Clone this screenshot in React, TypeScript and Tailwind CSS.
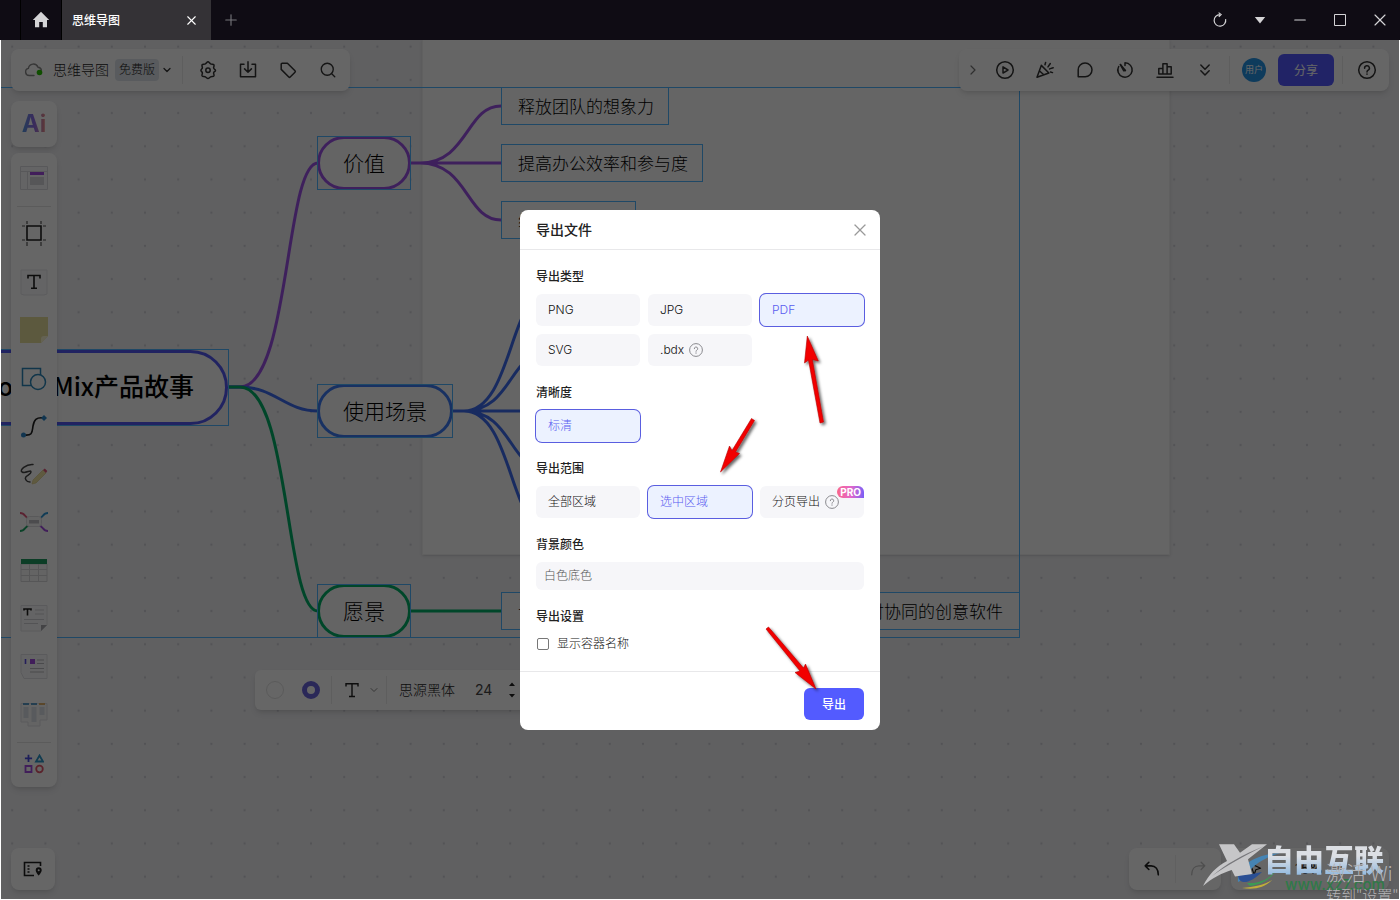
import { useState } from 'react'
import type { ReactNode } from 'react'
import { ChevronDown, ChevronRight, ChevronsDown, Minus, Plus, Search, X } from 'lucide-react'

const exportTypes = ['PNG', 'JPG', 'PDF', 'SVG', '.bdx']
const exportRanges = ['全部区域', '选中区域', '分页导出']

type MapNode = {
  text: string
  className: string
}

// 選択枠つきのトピック（角丸）
const topics: MapNode[] = [
  {
    text: '价值',
    className: 'left-[317px] top-[96px] h-[54px] w-[94px] border-[#9b51e6]',
  },
  {
    text: '使用场景',
    className: 'left-[317px] top-[344px] h-[54px] w-[136px] border-[#3e7bf5]',
  },
  {
    text: '愿景',
    className: 'left-[317px] top-[544px] h-[54px] w-[94px] border-[#00b067]',
  },
]

const leaves: MapNode[] = [
  { text: '释放团队的想象力', className: 'left-[501px] top-[47px] w-[168px]' },
  { text: '提高办公效率和参与度', className: 'left-[501px] top-[104px] w-[202px]' },
  { text: '缩短项目周期', className: 'left-[501px] top-[161px] w-[135px]' },
]

function Icon({ size = 20, children }: { size?: number; children: ReactNode }) {
  return (
    <svg
      width={size}
      height={size}
      viewBox="0 0 20 20"
      fill="none"
      stroke="currentColor"
      strokeWidth="1.5"
      strokeLinecap="round"
      strokeLinejoin="round"
    >
      {children}
    </svg>
  )
}

function ToolButton({ label, children }: { label: string; children: ReactNode }) {
  return (
    <button
      type="button"
      aria-label={label}
      className="flex h-10 w-10 items-center justify-center text-[#333]"
    >
      {children}
    </button>
  )
}

function SideButton({ label, children }: { label: string; children: ReactNode }) {
  return (
    <button
      type="button"
      aria-label={label}
      className="flex h-12 w-full items-center justify-center"
    >
      <svg width="32" height="32" viewBox="0 0 32 32" fill="none">
        {children}
      </svg>
    </button>
  )
}

function HelpMark() {
  return (
    <svg width="14" height="14" viewBox="0 0 14 14" fill="none" stroke="#8a8a8f">
      <circle cx="7" cy="7" r="6.4" />
      <path d="M5.3 5.7a1.7 1.7 0 1 1 2.5 1.5c-.5.3-.8.5-.8 1.1" strokeLinecap="round" />
      <path d="M7 9.8v.5" strokeLinecap="round" />
    </svg>
  )
}

function TitleBar() {
  return (
    <header className="flex h-10 shrink-0 bg-[#0f0c14] text-[#d4d4d6]">
      <button
        type="button"
        aria-label="首页"
        className="ml-5 flex w-[42px] items-center justify-center border-x border-black"
      >
        <svg width="18" height="18" viewBox="0 0 18 18" fill="currentColor">
          <path d="M9 .8 17.2 9H15v7.2h-4.2V11H7.2v5.2H3V9H.8z" />
        </svg>
      </button>
      <div className="flex w-[149px] items-center justify-between bg-[#343236] pr-3 pl-[10px] text-white">
        <span className="pt-px text-xs font-medium">思维导图</span>
        <button type="button" aria-label="关闭标签">
          <X size={15} strokeWidth={1.8} />
        </button>
      </div>
      <button
        type="button"
        aria-label="新建标签"
        className="flex w-10 items-center justify-center text-[#77767b]"
      >
        <Plus size={18} strokeWidth={1.5} />
      </button>
      <div className="ml-auto flex">
        <button type="button" aria-label="刷新" className="flex w-10 items-center justify-center">
          <svg width="16" height="16" viewBox="0 0 16 16" fill="none" stroke="currentColor" strokeWidth="1.2">
            <path d="M13.600 7.200A5.800 5.800 0 1 1 8 2.600M6.600.6l2.500 2-2.300 2.200" />
          </svg>
        </button>
        <button type="button" aria-label="更多" className="flex w-10 items-center justify-center">
          <svg width="12" height="8" viewBox="0 0 12 8" fill="currentColor">
            <path d="M.8 1h10.4L6 7.4z" />
          </svg>
        </button>
        <button type="button" aria-label="最小化" className="flex w-10 items-center justify-center">
          <Minus size={18} strokeWidth={1.5} />
        </button>
        <button type="button" aria-label="最大化" className="flex w-10 items-center justify-center">
          <svg width="12" height="12" viewBox="0 0 12 12" fill="none" stroke="currentColor">
            <path d="M.5.5h11v11H.5z" />
          </svg>
        </button>
        <button type="button" aria-label="关闭" className="flex w-10 items-center justify-center">
          <X size={20} strokeWidth={1.4} />
        </button>
      </div>
    </header>
  )
}

function MindMap() {
  return (
    <div className="absolute inset-0 overflow-hidden bg-[#efeff2] font-['Noto_Sans_CJK_SC',sans-serif]">
      <svg className="absolute inset-0 h-full w-full">
        <defs>
          <pattern id="dots" x="-4.4" y="-9.9" width="33.2" height="33.2" patternUnits="userSpaceOnUse">
            <circle cx="16.6" cy="16.6" r="1.1" fill="#cfcfd6" />
          </pattern>
        </defs>
        <rect width="100%" height="100%" fill="url(#dots)" />
      </svg>
      <div className="absolute top-0 left-[422px] h-[515px] w-[748px] border border-t-0 border-[#f0f0f0] bg-[#fcfcfc] shadow" />

      <svg className="absolute inset-0 h-full w-full" fill="none" strokeWidth="3">
        <g stroke="#9b51e6">
          <path d="M229 347H240C290 347 285 123 318 123" />
          <path d="M410 123H501M420 123C468 123 466 66 501 66M420 123C468 123 466 180 501 180" />
        </g>
        <g stroke="#3e6cf0">
          <path d="M229 347H240C275 347 285 371 318 371" />
          <path d="M452 371H543M464 371C511 371 510 257 543 257M464 371C511 371 510 314 543 314M464 371C511 371 510 428 543 428M464 371C511 371 510 485 543 485" />
        </g>
        <g stroke="#00b067">
          <path d="M229 347H240C290 347 285 571 318 571" />
          <path d="M410 571H501" />
        </g>
      </svg>

      <div className="absolute top-[309px] -left-[120px] flex h-[77px] w-[349px] border border-[#4fb4ff]">
        <div className="flex flex-1 items-center justify-end rounded-full border-[3px] border-[#5359f2] bg-[#fcfcfc] pr-[31px] pb-1 text-[25px] font-medium whitespace-nowrap text-black">
          BoardMix产品故事
        </div>
      </div>

      {topics.map((topic) => (
        <div key={topic.text} className={`absolute ${topic.className}`}>
          <div className="flex h-full items-center justify-center rounded-full border-[3px] border-inherit bg-[#fafafa] text-[21px] font-light whitespace-nowrap text-black">
            {topic.text}
          </div>
          <div className="absolute inset-0 border border-[#4fb4ff]" />
        </div>
      ))}

      {leaves.map((leaf) => (
        <div
          key={leaf.text}
          className={`absolute flex h-[38px] items-center border border-[#4fb4ff] bg-[#fcfcfc] pb-px pl-4 text-[17px] font-light whitespace-nowrap text-black ${leaf.className}`}
        >
          {leaf.text}
        </div>
      ))}
      <div className="absolute top-[552px] left-[501px] flex h-[38px] w-[519px] items-center justify-between border border-[#4fb4ff] bg-[#fafafa] px-4 pb-px text-[17px] font-light whitespace-nowrap text-black">
        <span>让</span>
        <span>实时协同的创意软件</span>
      </div>

      {/* 全体の選択範囲 */}
      <div className="absolute top-[47px] -left-[120px] h-[551px] w-[1140px] border border-[#4fb4ff]" />
    </div>
  )
}

function FileBar() {
  return (
    <div className="absolute top-[9px] left-[11px] flex h-[42px] items-center rounded-lg bg-white pr-[2px] pl-[13px] shadow-md">
      <svg width="20" height="16" viewBox="0 0 20 16" fill="none">
        <path
          d="M10 13.5H5.2a3.6 3.6 0 0 1-.8-7.1A5 5 0 0 1 14 5.2a3.8 3.8 0 0 1 3.4 3"
          stroke="#8a8a8a"
          strokeWidth="1.4"
          strokeLinecap="round"
        />
        <circle cx="15.5" cy="10.5" r="2.8" fill="#29c200" />
      </svg>
      <span className="ml-[9px] text-sm font-light text-[#222]">思维导图</span>
      <span className="ml-[6px] flex h-[22px] items-center rounded bg-[#dfe4ea] px-1 text-xs font-light text-[#222]">
        免费版
      </span>
      <button type="button" aria-label="文件菜单" className="ml-px flex w-[14px] justify-center text-[#333]">
        <ChevronDown size={12} strokeWidth={2.5} />
      </button>
      <div className="ml-2 h-7 w-px bg-[#ebebeb]" />
      <div className="ml-[5px] flex">
        <ToolButton label="设置">
          <Icon>
            <path d="M10 1.800c1 0 1.500 1.500 2.600 2.100 1.100.6 2.700.1 3.300.9.600 1-.3 2-.3 3 0 1.500 1.900 1.500 1.900 2.700s-1.900 1.200-1.900 2.400c0 1.100.8 2.100.3 3-.6.9-2.200.3-3.300.9-1.100.6-1.600 1.800-2.600 1.800s-1.500-1.200-2.600-1.800c-1.100-.6-2.700 0-3.300-.9-.5-.9.3-1.900.3-3 0-1.200-1.500-1.400-1.500-2.600s1.500-1.400 1.500-2.500c0-1-.8-2-.3-3 .6-.8 2.200-.3 3.300-.9C8.500 3.300 9 1.800 10 1.800z" />
            <circle cx="10" cy="10.200" r="2.200" />
          </Icon>
        </ToolButton>
        <ToolButton label="导出">
          <Icon>
            <path d="M6 4.200H2.500v12.600h15V4.200H14M10 1.800v10.400M6.600 8.900 10 12.300l3.400-3.400" />
          </Icon>
        </ToolButton>
        <ToolButton label="标签">
          <Icon>
            <path d="M3.200 4.200v5.200l7.600 7.600a1 1 0 0 0 1.400 0l4.800-4.800a1 1 0 0 0 0-1.400L9.400 3.200H4.200a1 1 0 0 0-1 1z" />
          </Icon>
        </ToolButton>
        <ToolButton label="搜索">
          <Search size={18} strokeWidth={1.8} />
        </ToolButton>
      </div>
    </div>
  )
}

function ActionBar() {
  return (
    <div className="absolute top-[9px] right-[11px] flex h-[42px] items-center rounded-lg bg-white pr-[2px] shadow-md">
      <button type="button" aria-label="收起" className="flex w-[26px] justify-center pl-[2px] text-[#777]">
        <ChevronRight size={16} strokeWidth={1.8} />
      </button>
      <ToolButton label="演示">
        <Icon>
          <circle cx="10" cy="10" r="8.300" />
          <path d="M8 6.900v6.200l5-3.100z" />
        </Icon>
      </ToolButton>
      <ToolButton label="庆祝">
        <Icon>
          <path d="M6.300 5.400 2 17.300l11.900-4.300zM6.300 5.400l7.600 7.600M4.600 11l4.200 3.700M10 4.700l.6-2.200M13 6.900l2.300-3.400M14.600 8.900l3.600-1.200M15.500 12l2 .6" />
        </Icon>
      </ToolButton>
      <ToolButton label="评论">
        <Icon>
          <path d="M3.200 16.800V10a6.900 6.900 0 1 1 6.900 6.800z" />
        </Icon>
      </ToolButton>
      <ToolButton label="计时">
        <Icon>
          <path d="M10 5.500V2.800a7.200 7.200 0 1 1-6.300 3.700M5.400 4.600l5 5.800" />
          <path d="m5.400 4.600 3.400 6.200 1.600-.4" />
        </Icon>
      </ToolButton>
      <ToolButton label="投票">
        <Icon>
          <path d="M2 17.300h16M3.800 14V8.500h4.100V14zM7.900 14V3.700h4.200V14zM12.100 14V6.700h4.100V14z" />
        </Icon>
      </ToolButton>
      <ToolButton label="更多工具">
        <ChevronsDown size={20} strokeWidth={1.800} />
      </ToolButton>
      <div className="ml-1 h-7 w-px bg-[#ebebeb]" />
      <span className="ml-3 flex h-6 w-6 items-center justify-center rounded-full bg-[#2494e6] text-[9px] text-white">
        用户
      </span>
      <button type="button" className="ml-3 h-8 w-14 rounded-md bg-[#5359ff] pt-px text-xs text-white">
        分享
      </button>
      <div className="ml-2 h-7 w-px bg-[#ebebeb]" />
      <div className="ml-1">
        <ToolButton label="帮助">
          <Icon>
            <circle cx="10" cy="10" r="8.300" />
            <path d="M7.600 8.200a2.400 2.400 0 1 1 3.600 2c-.8.500-1.200.8-1.200 1.700M10 14v.3" />
          </Icon>
        </ToolButton>
      </div>
    </div>
  )
}

function SideBar() {
  return (
    <aside className="absolute top-[61px] left-[11px] flex w-[46px] flex-col gap-[6px]">
      <button type="button" className="flex h-[46px] items-center justify-center rounded-lg bg-white shadow-md">
        <span className="bg-linear-to-r from-[#4a9ae0] via-[#8f6ae8] to-[#f08a7c] bg-clip-text text-2xl leading-none font-bold text-transparent">
          Ai
        </span>
      </button>
      <nav className="rounded-lg bg-white pt-px pb-[5px] shadow-md">
        <SideButton label="模板">
          <path d="M2.500 4.500h27v23h-27z" fill="#fbfbfc" stroke="#dcdce1" />
          <path d="M2.500 9.500h27M9.500 9.500v18" stroke="#dcdce1" />
          <path d="M12 10h14v3H12z" fill="#a24be0" />
          <path d="M12 15h14v8H12z" fill="#d8d8dc" />
        </SideButton>
        <div className="flex h-2 items-center px-[6px]">
          <div className="h-px flex-1 bg-[#e4e4e4]" />
        </div>
        <SideButton label="画板">
          <path d="M9 8h14v14H9z" stroke="#1f1f1f" strokeWidth="1.600" />
          <path
            d="M9 3v3M23 3v3M9 24v4M23 24v4M4 8h3M25 8h3M4 22h3M25 22h3"
            stroke="#555"
            strokeWidth="1.200"
          />
        </SideButton>
        <SideButton label="文本">
          <path d="M3 4h26v24l-3 1H6l-3-1z" fill="#fbfbfc" stroke="#e6e6ea" />
          <path
            d="M10 12.500V9.500h12v3M16 9.500v12.500M13 22.300h6"
            stroke="#1f1f1f"
            strokeWidth="1.600"
          />
        </SideButton>
        <SideButton label="便签">
          <path d="M2 3h28v19l-7 7H2z" fill="#e6df9c" />
          <path d="M23 29v-4a3 3 0 0 1 3-3h4z" fill="#fbf6cf" />
        </SideButton>
        <SideButton label="形状">
          <path d="M14 23.500H4.500V6.500h18V13" stroke="#2b86b8" strokeWidth="1.500" />
          <circle cx="20" cy="20" r="7.500" stroke="#2b86b8" strokeWidth="1.500" />
        </SideButton>
        <SideButton label="连线">
          <path d="M6 25c9 1 8-3 9-9s3-9 11-8" stroke="#1f1f1f" strokeWidth="1.600" />
          <circle cx="5.500" cy="25" r="2.500" fill="#2b86c8" />
          <path d="m26 5 3 3-3 3-3-3z" fill="#2b86c8" />
        </SideButton>
        <SideButton label="画笔">
          <path
            d="M15 6.500C8 6 1 12 4 14c4 2 9-3 9 0s-8 4-5 8c1 2 3 2 4 2"
            stroke="#444"
            strokeWidth="1.500"
            strokeLinecap="round"
          />
          <path d="m14 26 1-4L25 12l3 3-10 10z" fill="#eee0a0" stroke="#d8c87a" strokeWidth=".6" />
          <path d="m25 12 1.800-1.500 2.500 2.500L28 15z" fill="#e0567b" />
        </SideButton>
        <SideButton label="思维导图">
          <path d="M2 7c6 0 4 5 10 6" stroke="#e0567b" strokeWidth="2" />
          <path d="M30 7c-6 0-4 5-10 6" stroke="#2b96d6" strokeWidth="2" />
          <path d="M2 25c6 0 4-5 10-6" stroke="#1da565" strokeWidth="2" />
          <path d="M30 25c-6 0-4-5-10-6" stroke="#a24be0" strokeWidth="2" />
          <rect x="8.500" y="10.500" width="15" height="10" rx="3" fill="#fafafa" stroke="#dedee2" />
          <path d="M11 14h10v3.500H11z" fill="#bdbdc2" />
        </SideButton>
        <SideButton label="表格">
          <path d="M3 10h26v17.500H3z" fill="#fafafa" stroke="#d6d6da" />
          <path d="M3 15.500h26M3 21.500h26M11.500 10v17M20.500 10v17" stroke="#d6d6da" />
          <path d="M3 5h26v5H3z" fill="#1f9a5f" />
        </SideButton>
        <SideButton label="文档">
          <path d="M3 3.500h26V23l-6 6H3z" fill="#fbfbfc" stroke="#e2e2e6" />
          <path d="M23 29v-6h6z" fill="#a8a8ad" />
          <path d="M6 8.500V7h7v1.500M9.500 7v6.500" stroke="#1f1f1f" strokeWidth="1.600" />
          <path d="M17 8h9M17 12h9M6 17.500h20M6 21.500h14" stroke="#d0d0d4" />
        </SideButton>
        <SideButton label="卡片">
          <path d="M3 4.500h26v24H6l-3-6z" fill="#fbfbfc" stroke="#e2e2e6" />
          <path d="M7.500 9v5" stroke="#5a4be0" strokeWidth="1.600" />
          <path d="M12 9h5v5h-5z" fill="#a24be0" />
          <path d="M19 10h7M19 13.500h7M12 18.500h14M12 22h14" stroke="#b9b9be" />
        </SideButton>
        <SideButton label="看板">
          <path d="M3 5.500h26V22h-7v6H10v-4H3z" fill="#fafafa" stroke="#e2e2e6" />
          <path d="M5 6h6M13 6h6" stroke="#5b9bc8" strokeWidth="2" />
          <path d="M21 6h6" stroke="#e0b26b" strokeWidth="2" />
          <path d="M5.500 9h5v11h-5zM13.500 9h5v15h-5zM21.500 9h5v8h-5z" fill="#dde2e8" />
        </SideButton>
        <div className="flex h-2 items-center px-[6px]">
          <div className="h-px flex-1 bg-[#e4e4e4]" />
        </div>
        <button type="button" aria-label="更多" className="flex h-9 w-full items-center justify-center">
          <svg width="20" height="20" viewBox="0 0 20 20" fill="none" strokeWidth="1.800">
            <path d="M4.500.7v7.200M.9 4.300h7.200" stroke="#4a4be0" />
            <path d="M15.500 1.500 19 7.500h-7z" stroke="#2b96c8" />
            <path d="M1.500 12h6v6h-6z" stroke="#a24be0" />
            <circle cx="15.500" cy="15" r="3.300" stroke="#e0566b" />
          </svg>
        </button>
      </nav>
    </aside>
  )
}

function TextBar() {
  return (
    <div className="absolute top-[630px] left-[255px] flex h-10 w-[420px] items-center rounded-md bg-white shadow-md">
      <button
        type="button"
        aria-label="填充颜色"
        className="ml-[11px] h-[18px] w-[18px] rounded-full border border-[#e2e2e2]"
      />
      <button
        type="button"
        aria-label="边框颜色"
        className="ml-[18px] h-[18px] w-[18px] rounded-full border-[5px] border-[#6a64dc]"
      />
      <div className="ml-[11px] h-7 w-px bg-[#ebebeb]" />
      <button type="button" aria-label="文字样式" className="ml-3 flex items-center gap-2 text-[#222]">
        <svg width="16" height="16" viewBox="0 0 16 16" fill="none" stroke="currentColor" strokeWidth="1.400">
          <path d="M2 4.500V1.800h12v2.700M8 1.800v12.700M5 14.500h6" />
        </svg>
        <span className="text-[#888]">
          <ChevronDown size={12} />
        </span>
      </button>
      <div className="ml-[6px] h-7 w-px bg-[#ebebeb]" />
      <button type="button" className="ml-3 text-sm font-light text-[#222]">
        思源黑体
      </button>
      <button type="button" className="ml-5 text-sm text-[#444]">
        24
      </button>
      <svg className="ml-4" width="8" height="18" viewBox="0 0 8 18" fill="#222">
        <path d="M4 1.500 7 5H1zM4 16.500 1 13h6z" />
      </svg>
    </div>
  )
}

function BottomBars() {
  return (
    <>
      <div className="absolute bottom-[10px] left-[11px] flex h-[42px] w-11 items-center justify-center rounded-lg bg-white shadow-md">
        <button type="button" aria-label="导航" className="text-[#1f1f1f]">
          <svg width="20" height="16" viewBox="0 0 20 16" fill="none" stroke="currentColor" strokeWidth="1.600">
            <path d="M11 14.500H1.500v-13h16V5M4.500 5h2M4.500 8h2M4.500 11h2" />
            <path
              d="M15.700 6.200a3 3 0 0 0-3 3c0 2 3 5.300 3 5.300s3-3.300 3-5.300a3 3 0 0 0-3-3zm0 2a1 1 0 1 1 0 2 1 1 0 0 1 0-2z"
              fill="currentColor"
              fillRule="evenodd"
              stroke="none"
            />
          </svg>
        </button>
      </div>
      <div className="absolute right-[11px] bottom-[10px] flex gap-[10px]">
        <div className="flex h-[42px] w-[92px] items-center rounded-lg bg-white shadow-md">
          <button type="button" aria-label="撤销" className="flex flex-1 justify-center text-[#1f1f1f]">
            <Icon size={18}>
              <path d="M6.500 2.500 2.500 6.500l4 4M3 6.500h6c5 0 8 4 8 10" strokeWidth="1.800" />
            </Icon>
          </button>
          <div className="h-7 w-px bg-[#f0f0f0]" />
          <button type="button" aria-label="重做" className="flex flex-1 justify-center text-[#c4c4c4]">
            <Icon size={18}>
              <path d="m13.500 2.500 4 4-4 4M17 6.500h-6c-5 0-8 4-8 10" />
            </Icon>
          </button>
        </div>
        <div className="flex h-[42px] w-[158px] items-center rounded-lg bg-white pl-4 text-sm text-[#222] shadow-md">
          <Icon size={16}>
            <path d="m4 3 13 6-6 2-2 6z" />
          </Icon>
          <span className="ml-8">15%</span>
        </div>
      </div>
    </>
  )
}

function Option({
  text,
  selected,
  onClick,
  help,
  pro,
}: {
  text: string
  selected: boolean
  onClick: () => void
  help?: boolean
  pro?: boolean
}) {
  return (
    <button
      type="button"
      aria-pressed={selected}
      onClick={onClick}
      className={`relative flex h-8 items-center gap-[5px] rounded-md px-3 text-xs font-light ${
        selected ? 'bg-[#ecf2ff] text-[#5a5df0] ring-1 ring-[#5a5ee0]' : 'bg-[#f6f6f9] text-[#111]'
      }`}
    >
      {text}
      {help && <HelpMark />}
      {pro && (
        <span className="absolute top-0 right-0 flex h-3 items-center rounded-t-md rounded-bl-md bg-linear-to-r from-[#f9658a] via-[#e566c8] to-[#7b5cf5] px-[3px] text-[10px] leading-3 font-bold text-white">
          PRO
        </span>
      )}
    </button>
  )
}

function Arrows() {
  return (
    <svg
      className="pointer-events-none absolute inset-0 h-full w-full"
      viewBox="0 0 360 520"
      fill="#f20000"
      stroke="#b30000"
      strokeWidth=".6"
    >
      <defs>
        <filter id="arrowShadow" x="-30%" y="-30%" width="160%" height="160%">
          <feDropShadow dx="2" dy="2" stdDeviation="1.500" floodColor="#000" floodOpacity=".6" />
        </filter>
      </defs>
      <g filter="url(#arrowShadow)">
        <path d="m287.300 126 11 25-6-1.500L303.500 212l-3.500 1L288.500 150l-4 3z" />
        <path d="m200.500 262 9-26 2.500 4.500L231.500 208.500l3 2L215.500 242l4 1.500z" />
        <path d="m296 479-21-16.500 5-1.500L246 419l2.500-2L283.500 458l2-4z" />
      </g>
    </svg>
  )
}

function ExportDialog() {
  const [type, setType] = useState('PDF')
  const [range, setRange] = useState('选中区域')
  const [showName, setShowName] = useState(false)

  return (
    <div
      role="dialog"
      aria-labelledby="export-title"
      className="relative w-[360px] rounded-lg bg-white text-[#222]"
    >
      <div className="flex h-10 items-center justify-between border-b border-[#e8e8ea] pr-[10px] pl-4">
        <h1 id="export-title" className="text-sm font-medium">
          导出文件
        </h1>
        <button type="button" aria-label="关闭" className="text-[#999]">
          <X size={20} strokeWidth={1.500} />
        </button>
      </div>

      <div className="flex flex-col gap-4 px-4 pt-4 pb-[17px] text-xs">
        <section className="flex flex-col gap-2">
          <h2 className="h-5 leading-[22px] font-medium">导出类型</h2>
          <div className="grid grid-cols-3 gap-2">
            {exportTypes.map((t) => (
              <Option
                key={t}
                text={t}
                selected={type === t}
                onClick={() => setType(t)}
                help={t === '.bdx'}
              />
            ))}
          </div>
        </section>
        <section className="flex flex-col gap-2">
          <h2 className="h-5 leading-[22px] font-medium">清晰度</h2>
          <div className="grid grid-cols-3 gap-2">
            <Option text="标清" selected onClick={() => {}} />
          </div>
        </section>
        <section className="flex flex-col gap-2">
          <h2 className="h-5 leading-[22px] font-medium">导出范围</h2>
          <div className="grid grid-cols-3 gap-2">
            {exportRanges.map((r) => (
              <Option
                key={r}
                text={r}
                selected={range === r}
                onClick={() => setRange(r)}
                help={r === '分页导出'}
                pro={r === '分页导出'}
              />
            ))}
          </div>
        </section>
        <section className="flex flex-col gap-2">
          <label htmlFor="background" className="h-5 leading-[22px] font-medium">
            背景颜色
          </label>
          <select
            id="background"
            className="h-7 w-full appearance-none rounded-md bg-[#f6f6f9] px-2 font-light text-[#555]"
          >
            <option>白色底色</option>
          </select>
        </section>
        <section className="flex flex-col gap-2">
          <h2 className="h-5 leading-[22px] font-medium">导出设置</h2>
          <label className="flex h-5 items-center gap-2 font-light text-[#111]">
            <input
              type="checkbox"
              checked={showName}
              onChange={(e) => setShowName(e.target.checked)}
              className="ml-px h-3 w-3 appearance-none rounded-xs border border-[#777] checked:bg-[#535bff]"
            />
            显示容器名称
          </label>
        </section>
      </div>

      <div className="flex justify-end border-t border-[#e8e8ea] px-4 pt-4 pb-[10px]">
        <button type="button" className="h-8 w-[60px] rounded-md bg-[#535bff] pt-px text-xs font-medium text-white">
          导出
        </button>
      </div>
      <Arrows />
    </div>
  )
}

function Watermark() {
  return (
    <div className="pointer-events-none absolute right-0 bottom-0 h-[60px] w-[200px] overflow-hidden">
      <svg className="absolute inset-0" width="200" height="60" viewBox="0 0 200 60">
        <path d="M38 42C36 26 56 14 80 13 64 18 50 26 46 38z" fill="#4584b4" />
        <path d="M38 34c0 12 12 10 24-2-10 2-18 4-24 2z" fill="#2b4f94" />
        <path d="M50 46c14-2 22-8 27-18-6 10-16 16-30 15z" fill="#3c9a55" />
        <path d="M42 48c12 2 22 0 30-8-8 5-18 7-30 8z" fill="#c0ae3a" />
        <path d="M19 4.300h15L40 12.700 52 4.300h15L48 19.300 52 34 35 36.500 31.700 30C22 33 12 38 3 46 9 34 16 27 27 21z" fill="#c6c6c8" />
        <path d="M12 36C26 24 42 15 64 6 44 16 26 26 12 36z" fill="#77777b" />
      </svg>
      <div className="absolute top-0 left-[64px] bg-linear-to-b from-[#dcdfe4] from-40% to-[#7fb0de] bg-clip-text text-[30px] leading-10 font-black whitespace-nowrap text-transparent">
        自由互联
      </div>
      <div className="absolute top-[37px] left-[85px] text-[15px] leading-4 font-medium text-[#2f7a48]">
        www.xz7.com
      </div>
      <div className="absolute top-[22px] left-[126px] font-['Noto_Sans_CJK_SC',sans-serif] text-xl leading-[22px] font-light whitespace-nowrap text-[#b4b4b6]">
        激活 Wi
        <p className="text-[15px] leading-[22px]">转到"设置"</p>
      </div>
    </div>
  )
}

export default function App() {
  return (
    <div className="flex h-screen flex-col overflow-hidden font-[Inter,'Noto_Sans_CJK_SC',sans-serif]">
      <TitleBar />
      <main className="relative min-h-0 flex-1">
        <MindMap />
        <FileBar />
        <ActionBar />
        <SideBar />
        <TextBar />
        <BottomBars />
        <div className="absolute inset-0 flex items-center justify-center bg-black/60">
          <ExportDialog />
        </div>
        <Watermark />
        <div className="pointer-events-none absolute inset-0 border border-t-0 border-white" />
      </main>
    </div>
  )
}
